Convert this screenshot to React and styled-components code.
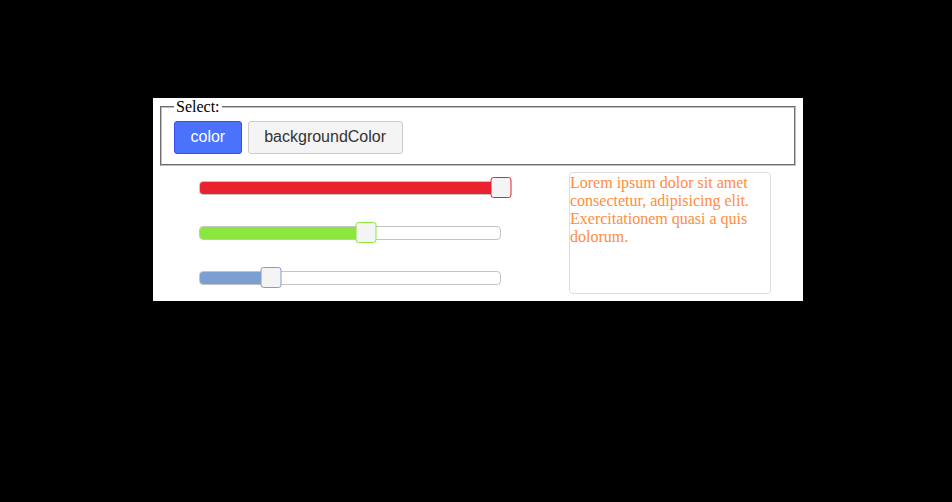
import React from "react";
import styled, { createGlobalStyle } from "styled-components";

const Global = createGlobalStyle`
  html, body { margin: 0; padding: 0; background: #000; }
  body { font-family: "Liberation Serif", "Times New Roman", serif; font-size: 16px; }
`;

const Panel = styled.div`
  margin: 98px 0 0 153px;
  width: 650px;
  height: 203px;
  background: #fff;
  box-sizing: border-box;
  padding: 0 7px 0 7px;
`;

const Fieldset = styled.fieldset`
  margin: 0;
  padding: 4.6px 12px 10px;
  border: 2px groove rgb(192, 192, 192);
  display: flex;
  gap: 6px;
`;

const Legend = styled.legend`
  padding: 0 2px;
  font-family: "Liberation Serif", serif;
  font-size: 16px;
  color: #000;
`;

const Button = styled.button`
  height: 33px;
  padding: 0 15.5px;
  border-radius: 3px;
  font-family: "Liberation Sans", Arial, sans-serif;
  font-size: 16px;
  cursor: pointer;
  border: 1px solid ${(p) => (p.$active ? "#3b4cf2" : "#cccccc")};
  background: ${(p) => (p.$active ? "#4a72fb" : "#f4f4f4")};
  color: ${(p) => (p.$active ? "#ffffff" : "#333333")};
`;

const Content = styled.div`
  display: flex;
  align-items: flex-start;
  margin-top: 6px;
  padding-left: 39px;
  gap: 68px;
`;

const Sliders = styled.div`
  width: 302px;
  padding-top: 5px;
  display: flex;
  flex-direction: column;
`;

const SliderRow = styled.div`
  position: relative;
  height: 45px;
`;

const Track = styled.div`
  position: relative;
  margin-top: 4px;
  height: 14px;
  box-sizing: border-box;
  border: 1px solid #c4c4c4;
  border-radius: 4px;
  background: #fff;
  overflow: hidden;
`;

const Fill = styled.div`
  height: 100%;
  background: ${(p) => p.$color};
`;

const Thumb = styled.div`
  position: absolute;
  top: 0;
  width: 21px;
  height: 21px;
  box-sizing: border-box;
  border: 1px solid ${(p) => p.$color};
  border-radius: 3px;
  background: #f4f4f4;
  transform: translateX(-10.5px);
`;

const TextBox = styled.div`
  width: 202px;
  height: 122px;
  box-sizing: border-box;
  border: 1px solid #dddddd;
  border-radius: 4px;
  font-family: "Liberation Serif", "Times New Roman", serif;
  font-size: 16px;
  line-height: 18px;
  color: rgb(255, 141, 61);
  padding-top: 1px;
`;

const sliders = [
  { value: 255, color: "#e8232f" },
  { value: 141, color: "#8be640" },
  { value: 61, color: "#7b9fd0" },
];

function Slider({ value, color }) {
  const pct = (value / 255) * 100;
  return (
    <SliderRow>
      <Track>
        <Fill $color={color} style={{ width: `${pct}%` }} />
      </Track>
      <Thumb $color={color} style={{ left: `${pct}%` }} />
    </SliderRow>
  );
}

export default function App() {
  return (
    <>
      <Global />
      <Panel>
        <Fieldset>
          <Legend>Select:</Legend>
          <Button $active>color</Button>
          <Button>backgroundColor</Button>
        </Fieldset>
        <Content>
          <Sliders>
            {sliders.map((s, i) => (
              <Slider key={i} value={s.value} color={s.color} />
            ))}
          </Sliders>
          <TextBox>
            Lorem ipsum dolor sit amet consectetur, adipisicing elit.
            Exercitationem quasi a quis dolorum.
          </TextBox>
        </Content>
      </Panel>
    </>
  );
}
